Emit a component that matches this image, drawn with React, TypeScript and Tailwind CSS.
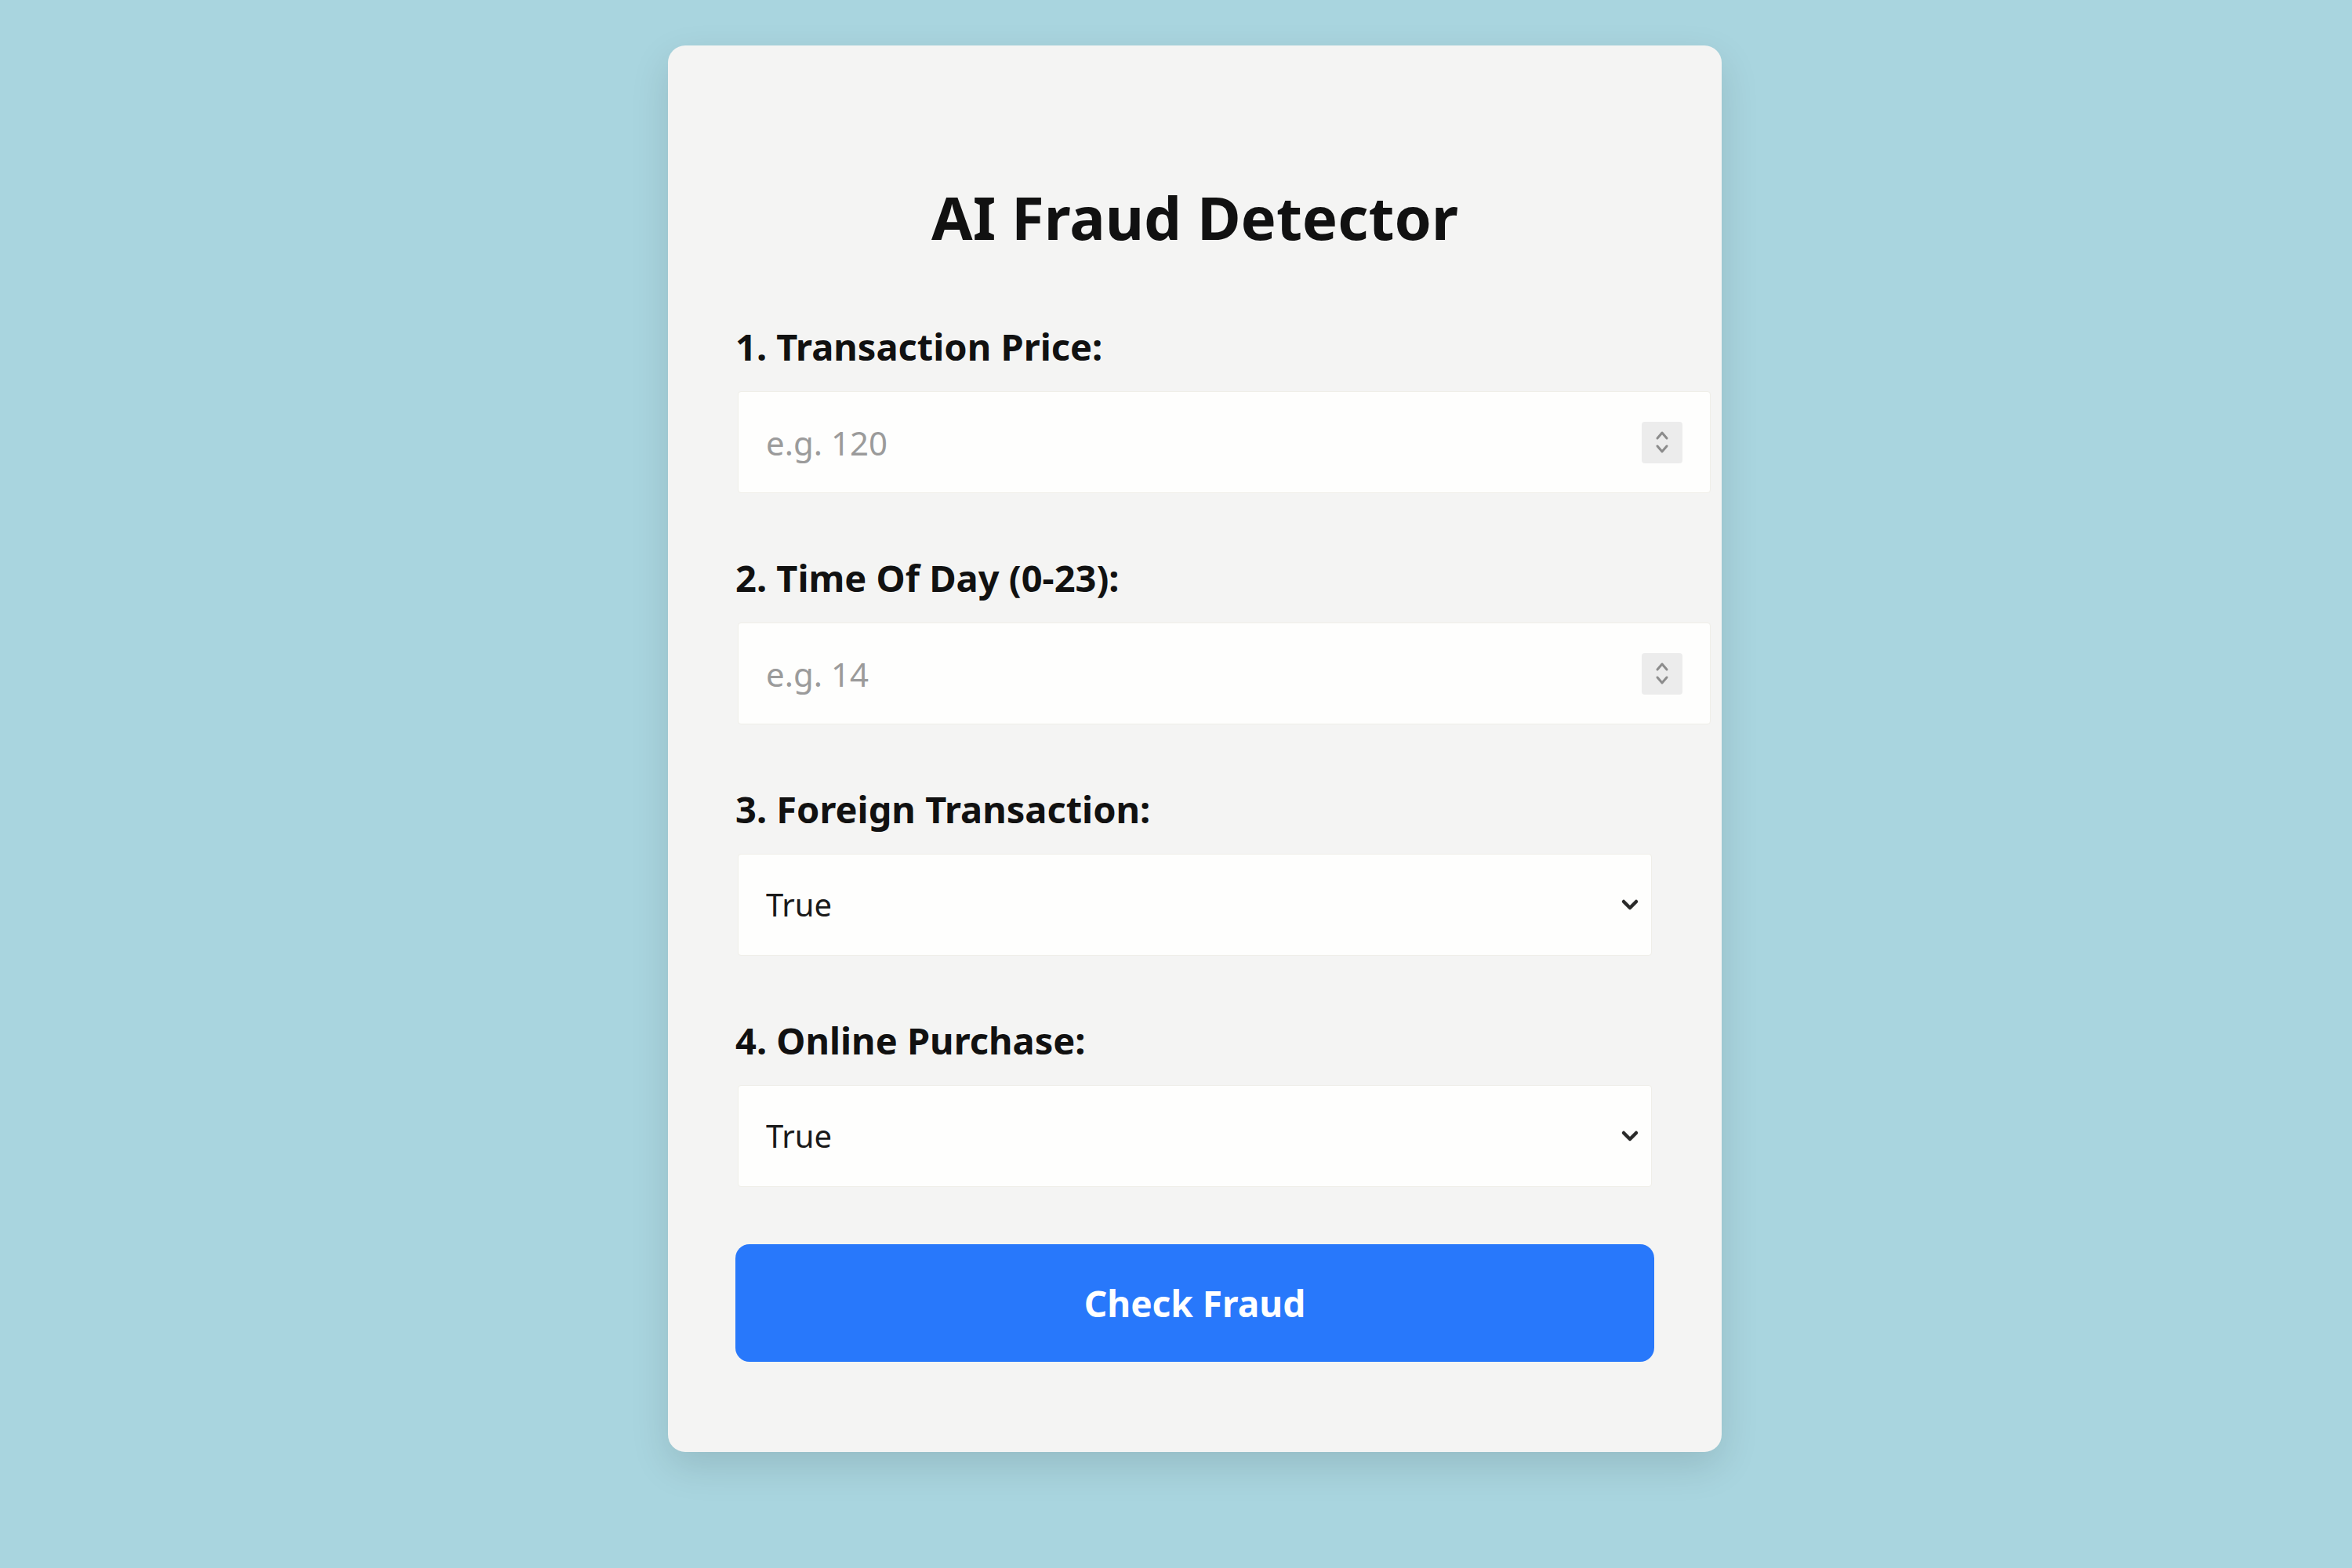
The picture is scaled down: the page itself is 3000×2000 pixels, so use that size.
import { useState } from 'react';

const fields = [
  { label: '1. Transaction Price:', kind: 'number', placeholder: 'e.g. 120' },
  { label: '2. Time Of Day (0-23):', kind: 'number', placeholder: 'e.g. 14' },
  { label: '3. Foreign Transaction:', kind: 'select' },
  { label: '4. Online Purchase:', kind: 'select' },
];

function Spinner() {
  return (
    <div className="w-[52px] h-[53px] shrink-0 rounded-[4px] bg-[#ececec] flex items-center justify-center">
      <svg width="22" height="36" viewBox="0 0 22 36" fill="none" stroke="#8c8c8c" strokeWidth="3" strokeLinecap="round" strokeLinejoin="round">
        <path d="M5 13 L11 6 L17 13" />
        <path d="M5 23 L11 30 L17 23" />
      </svg>
    </div>
  );
}

function Chevron() {
  return (
    <svg width="28" height="18" viewBox="0 0 28 18" fill="none" stroke="#2a2a2a" strokeWidth="4.5" strokeLinecap="round" strokeLinejoin="round" className="shrink-0">
      <path d="M6 5 L14 13 L22 5" />
    </svg>
  );
}

export default function App() {
  const [values, setValues] = useState<Record<number, string>>({ 2: 'True', 3: 'True' });

  return (
    <div
      className="min-h-screen bg-[#a9d5df] flex justify-center pt-[58px] pb-[148px] pl-[48px]"
      style={{ fontFamily: '"Noto Sans", "Open Sans", sans-serif' }}
    >
      <div className="w-[1344px] rounded-[22px] bg-[#f4f4f3] shadow-[0_18px_50px_rgba(0,0,0,0.12)] px-[89px] pt-[172px] pb-[115px]">
        <h1 className="text-[76px] leading-[94px] font-bold text-center text-[#111]">AI Fraud Detector</h1>

        <form className="mt-[84px] flex flex-col" onSubmit={(e) => e.preventDefault()}>
          {fields.map((field, i) => (
            <div key={i} className={i > 0 ? 'mt-[74px]' : ''}>
              <label className="block -ml-[3px] text-[47px] leading-[69px] font-bold text-[#111]">{field.label}</label>

              {field.kind === 'number' ? (
                <div className="mt-[22px] w-[1241px] h-[130px] rounded-[4px] border border-[#efeee8] bg-[#fefefd] flex items-center pl-[35px] pr-[35px]">
                  <input
                    type="number"
                    placeholder={field.placeholder}
                    value={values[i] ?? ''}
                    onChange={(e) => setValues({ ...values, [i]: e.target.value })}
                    className="flex-1 min-w-0 bg-transparent outline-none text-[42px] text-[#222] placeholder:text-[#9b9b9b] [appearance:textfield] [&::-webkit-inner-spin-button]:appearance-none [&::-webkit-outer-spin-button]:appearance-none"
                  />
                  <Spinner />
                </div>
              ) : (
                <div className="mt-[22px] w-full h-[130px] rounded-[4px] border border-[#efeee8] bg-[#fefefd] flex items-center pl-[35px] pr-[13px]">
                  <select
                    value={values[i]}
                    onChange={(e) => setValues({ ...values, [i]: e.target.value })}
                    className="flex-1 min-w-0 h-full appearance-none bg-transparent outline-none text-[40px] text-[#1a1a1a]"
                  >
                    <option>True</option>
                    <option>False</option>
                  </select>
                  <Chevron />
                </div>
              )}
            </div>
          ))}

          <button
            type="submit"
            className="mt-[73px] -ml-[3px] w-[calc(100%+6px)] h-[150px] rounded-[18px] bg-[#2878fb] text-white text-[46px] font-bold"
          >
            Check Fraud
          </button>
        </form>
      </div>
    </div>
  );
}
